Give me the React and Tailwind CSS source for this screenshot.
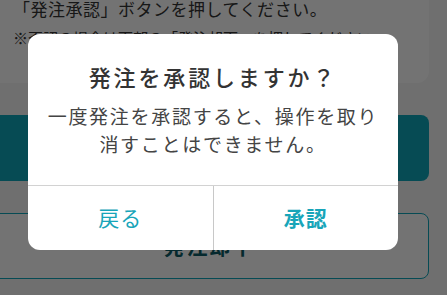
export default function App() {
  return (
    <div
      className="relative h-[295px] w-[447px] overflow-hidden bg-[#f6f6f6]"
      style={{ fontFamily: '"Noto Sans CJK JP", "Noto Sans", sans-serif' }}
    >
      {/* page content (scrolled) */}
      <div className="-ml-[10px] w-[439px]">
        <div className="-mt-[12px] rounded-xl bg-white pb-[33px] pl-[23px] pt-[7px]">
          <p className="text-[17px] leading-[28px] tracking-[0.03em] text-[#333]">「発注承認」ボタンを押してください。</p>
          <p className="mt-[3px] text-[15px] leading-[24px] text-[#333]">※否認の場合は下部の「発注却下」を押してください。</p>
        </div>
        <button className="mt-[32px] flex h-[66px] w-full items-center justify-center rounded-lg bg-[#0ea7bb] text-[20px] font-bold text-white">
          発注承認
        </button>
        <button className="mt-[32px] flex h-[66px] w-full items-center justify-center rounded-lg border border-[#0ea7bb] bg-white text-[21px] font-bold tracking-[0.1em] text-[#0c5c66]">
          発注却下
        </button>
      </div>

      {/* overlay */}
      <div className="absolute inset-0 bg-black/55" />

      {/* dialog */}
      <div className="absolute left-[28px] top-[34px] w-[370px] overflow-hidden rounded-xl bg-white">
        <div className="px-2 pb-[27px] pt-[27px] text-center">
          <h2 className="text-[22px] font-medium leading-[30px] tracking-[0.13em] text-[#333]">
            発注を承認しますか？
          </h2>
          <p className="mt-[11px] text-[19px] leading-[28px] tracking-[0.09em] text-[#444]">
            一度発注を承認すると、操作を取り
            <br />
            消すことはできません。
          </p>
        </div>
        <div className="flex h-[65px] border-t-[1.5px] border-[#d2d2d2]">
          <button className="flex flex-1 items-center justify-center text-[21px] tracking-[0.05em] text-[#18a5b9]">
            戻る
          </button>
          <div className="w-px bg-[#c8c8c8]" />
          <button className="flex flex-1 items-center justify-center text-[21px] font-bold tracking-[0.05em] text-[#18a5b9]">
            承認
          </button>
        </div>
      </div>
    </div>
  );
}
